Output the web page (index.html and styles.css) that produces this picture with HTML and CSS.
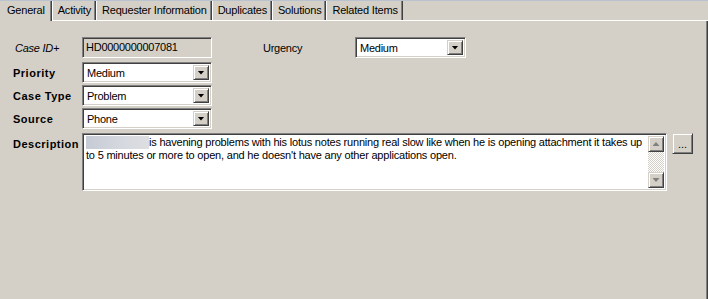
FILE: index.html
```html
<html lang="en">
  <head>
    <link rel="stylesheet" href="styles.css">
  </head>
  <body>
    <div id="case-window">
      <div class="tabs">
        <div class="tab active">General</div>
        <div class="tab">Activity</div>
        <div class="tab">Requester Information</div>
        <div class="tab">Duplicates</div>
        <div class="tab">Solutions</div>
        <div class="tab">Related Items</div>
      </div>
      <div class="panel">
        <div class="form">
          <div class="row row-top">
            <span class="label label-id">Case ID+</span>
            <div class="field readonly">HD0000000007081</div>
            <span class="label label-urgency">Urgency</span>
            <div class="combo combo-urgency">
              <span class="combo-text">Medium</span>
              <span class="combo-btn"><i class="arrow"></i></span>
            </div>
          </div>
          <div class="row">
            <span class="label bold">Priority</span>
            <div class="combo">
              <span class="combo-text">Medium</span>
              <span class="combo-btn"><i class="arrow"></i></span>
            </div>
          </div>
          <div class="row">
            <span class="label bold">Case Type</span>
            <div class="combo">
              <span class="combo-text">Problem</span>
              <span class="combo-btn"><i class="arrow"></i></span>
            </div>
          </div>
          <div class="row">
            <span class="label bold">Source</span>
            <div class="combo">
              <span class="combo-text">Phone</span>
              <span class="combo-btn"><i class="arrow"></i></span>
            </div>
          </div>
          <div class="row row-desc">
            <span class="label bold label-desc">Description</span>
            <div class="memo">
              <div class="memo-text"><span class="redacted"></span>is havening problems with his lotus notes running real slow like when he is opening attachment it takes up<br>to 5 minutes or more to open, and he doesn't have any other applications open.</div>
              <div class="scrollbar">
                <span class="scroll-btn"><i class="arrow-up"></i></span>
                <span class="scroll-track"></span>
                <span class="scroll-btn"><i class="arrow-down"></i></span>
              </div>
            </div>
            <button class="more-btn" type="button">...</button>
          </div>
        </div>
      </div>
    </div>
  </body>
</html>
```
FILE: styles.css
```css
body, html {
  margin: 0;
  width: 100%;
  height: 100%;
  background: #d4d0c8;
  color: #000;
  font-family: 'Liberation Sans', Arial, sans-serif;
  font-size: 11px;
  letter-spacing: -.25px;
  overflow: hidden;
}
#case-window {
  width: 708px;
  height: 299px;
  display: flex;
  flex-direction: column;
  border-top: solid 1px #b9c2cf;
  box-sizing: border-box;
}
.tabs {
  display: flex;
  height: 19px;
  border-bottom: solid 1px #fff;
}
.tab {
  padding: 0 4px 0 5px;
  line-height: 19px;
  letter-spacing: -.2px;
  white-space: nowrap;
  border-left: solid 1px #fff;
  border-right: solid 1px #404040;
  box-shadow: inset -1px 0 #808080;
}
.tab.active {
  height: 20px;
  margin-bottom: -1px;
  padding: 0 6px 0 7px;
  border-left: none;
  background: #d4d0c8;
}
.panel {
  flex: 1;
  border-right: solid 1px #404040;
  box-shadow: inset -1px 0 #808080;
  padding: 16px 0 0 13px;
}
.form {
  display: flex;
  flex-direction: column;
  gap: 2px;
}
.row {
  display: flex;
  align-items: center;
}
.row-top {
  margin-bottom: 2px;
}
.row-desc {
  margin-top: 2px;
  align-items: flex-start;
}
.label {
  width: 69px;
  flex: none;
  white-space: nowrap;
}
.label.bold {
  font-weight: bold;
  letter-spacing: .5px;
}
.label-id {
  padding-left: 2px;
  box-sizing: border-box;
  font-style: italic;
}
.label-urgency {
  width: 92px;
  margin-left: 51px;
}
.label-desc {
  margin-top: 5px;
}
.field, .combo, .memo {
  box-sizing: border-box;
  border: solid 1px;
  border-color: #808080 #fff #fff #808080;
  box-shadow: inset 1px 1px #404040, inset -1px -1px #d4d0c8;
  background: #fff;
}
.field {
  width: 130px;
  height: 21px;
  padding: 0 3px;
  line-height: 19px;
}
.field.readonly {
  background: #d4d0c8;
}
.combo {
  width: 130px;
  height: 21px;
  display: flex;
  padding: 2px;
}
.combo-urgency {
  width: 111px;
}
.combo-text {
  flex: 1;
  padding-left: 2px;
  line-height: 17px;
}
.combo-btn, .scroll-btn, .more-btn {
  box-sizing: border-box;
  border: solid 1px;
  border-color: #d4d0c8 #404040 #404040 #d4d0c8;
  box-shadow: inset 1px 1px #fff, inset -1px -1px #808080;
  background: #d4d0c8;
  display: flex;
  align-items: center;
  justify-content: center;
}
.combo-btn {
  width: 16px;
}
.arrow {
  width: 7px;
  height: 4px;
  background: #000;
  clip-path: polygon(0 0, 100% 0, 50% 100%);
}
.memo {
  width: 585px;
  height: 58px;
  display: flex;
  padding: 2px;
}
.memo-text {
  flex: 1;
  padding-left: 1px;
  line-height: 13px;
  letter-spacing: -.2px;
  white-space: nowrap;
  overflow: hidden;
}
.redacted {
  display: inline-block;
  width: 63px;
  height: 13px;
  vertical-align: top;
  background: linear-gradient(90deg, #c6cad4, #d6d9df 60%, #dcdee2);
}
.scrollbar {
  width: 16px;
  display: flex;
  flex-direction: column;
}
.scroll-btn {
  height: 16px;
  flex: none;
}
.scroll-track {
  flex: 1;
  background: repeating-conic-gradient(#fff 0 25%, #d4d0c8 0 50%) 0 0 / 2px 2px;
}
.arrow-up, .arrow-down {
  width: 7px;
  height: 4px;
  background: #808080;
  filter: drop-shadow(1px 1px 0 #fff);
}
.arrow-up {
  clip-path: polygon(50% 0, 100% 100%, 0 100%);
}
.arrow-down {
  clip-path: polygon(0 0, 100% 0, 50% 100%);
}
.more-btn {
  width: 21px;
  height: 21px;
  margin: 0 0 0 5px;
  padding: 0 0 3px;
  font-family: inherit;
  font-size: 11px;
  letter-spacing: 0;
  color: #000;
  align-items: flex-end;
}
```
